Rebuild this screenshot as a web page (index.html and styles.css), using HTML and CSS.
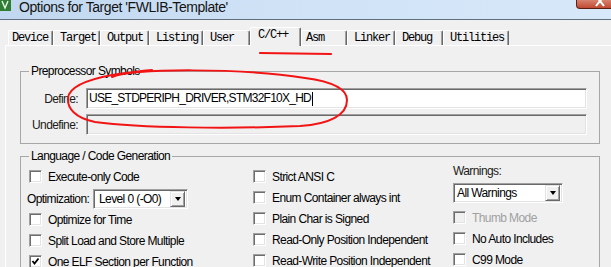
FILE: index.html
```html
<!DOCTYPE html>
<html lang="en">
<head>
    <meta charset="UTF-8">
    <meta name="viewport" content="width=device-width, initial-scale=1.0">
    <title>Options for Target 'FWLIB-Template'</title>
    <link rel="stylesheet" href="styles.css">
</head>
<body>
    <div class="titlebar">
        <svg class="app-icon" viewBox="0 0 11 11">
            <rect x="0" y="0" width="11" height="11" fill="#2e7d32"/>
            <path d="M2 1 L5 8 L8 1" fill="none" stroke="#e8f5e9" stroke-width="1.4"/>
        </svg>
        <span class="title">Options for Target 'FWLIB-Template'</span>
        <div class="close-btn">
            <svg viewBox="0 0 41 9" width="41" height="9">
                <path d="M20 -3 L28 7 M28 -3 L20 7" stroke="#fff" stroke-width="2"/>
            </svg>
        </div>
    </div>

    <div class="dialog">
        <div class="tabs">
            <div class="tab">Device</div>
            <div class="tab">Target</div>
            <div class="tab">Output</div>
            <div class="tab">Listing</div>
            <div class="tab">User</div>
            <div class="tab active">C/C++</div>
            <div class="tab">Asm</div>
            <div class="tab">Linker</div>
            <div class="tab">Debug</div>
            <div class="tab">Utilities</div>
        </div>

        <div class="pane">
            <fieldset class="group group-pre">
                <legend>Preprocessor Symbols</legend>
                <div class="field-row">
                    <span class="field-label">Define:</span>
                    <div class="textbox">USE_STDPERIPH_DRIVER,STM32F10X_HD<span class="caret"></span></div>
                </div>
                <div class="field-row">
                    <span class="field-label">Undefine:</span>
                    <div class="textbox disabled"></div>
                </div>
            </fieldset>

            <fieldset class="group group-lang">
                <legend>Language / Code Generation</legend>
                <div class="cols">
                    <div class="col col-left">
                        <div class="check"><span class="box"></span>Execute-only Code</div>
                        <div class="opt-row">
                            <span class="opt-label">Optimization:</span>
                            <div class="select select-opt">
                                <span>Level 0 (-O0)</span>
                                <span class="select-arrow"><i></i></span>
                            </div>
                        </div>
                        <div class="check"><span class="box"></span>Optimize for Time</div>
                        <div class="check"><span class="box"></span>Split Load and Store Multiple</div>
                        <div class="check">
                            <span class="box">
                                <svg viewBox="0 0 9 9" width="9" height="9"><path d="M1.5 4 L3.5 6.5 L7.5 1.5" fill="none" stroke="#000" stroke-width="1.8"/></svg>
                            </span>One ELF Section per Function
                        </div>
                    </div>

                    <div class="col col-mid">
                        <div class="check"><span class="box"></span>Strict ANSI C</div>
                        <div class="check"><span class="box"></span>Enum Container always int</div>
                        <div class="check"><span class="box"></span>Plain Char is Signed</div>
                        <div class="check"><span class="box"></span>Read-Only Position Independent</div>
                        <div class="check"><span class="box"></span>Read-Write Position Independent</div>
                    </div>

                    <div class="col col-right">
                        <div class="warn-label">Warnings:</div>
                        <div class="select select-warn">
                            <span>All Warnings</span>
                            <span class="select-arrow"><i></i></span>
                        </div>
                        <div class="check disabled"><span class="box"></span>Thumb Mode</div>
                        <div class="check"><span class="box"></span>No Auto Includes</div>
                        <div class="check"><span class="box"></span>C99 Mode</div>
                    </div>
                </div>
            </fieldset>
        </div>
    </div>

    <!-- red pen marks drawn over the screenshot -->
    <svg class="marks" viewBox="0 0 611 267" width="611" height="267">
        <path d="M260 53 L331 54" stroke="#f21414" stroke-width="2.2" fill="none" stroke-linecap="round"/>
        <path d="M112 77 C 135 68, 240 68, 305 78 C 335 82, 347 90, 347 100 C 347 115, 330 124, 300 126 C 230 129, 140 128, 95 122 C 75 118, 67 108, 68 98 C 69 88, 85 80, 112 75 C 125 73, 140 71, 152 70" stroke="#f21414" stroke-width="2" fill="none" stroke-linecap="round"/>
    </svg>
</body>
</html>
```

FILE: styles.css
```css
html, body {
    margin: 0;
}

body {
    width: 611px;
    height: 267px;
    overflow: hidden;
    position: relative;
    background: #f0f0f0;
    font-family: "Liberation Sans", Arial, sans-serif;
    font-size: 12px;
    letter-spacing: -0.6px;
    color: #000;
}

/* window caption */
.titlebar {
    height: 19px;
    border-bottom: 1px solid #5f6f80;
    background: linear-gradient(to right, #c0d7ef, #cfe2f6 45%, #d7e8f9);
    display: flex;
    align-items: flex-start;
    position: relative;
}

.app-icon {
    width: 11px;
    height: 11px;
    margin-right: 8px;
    flex: none;
}

.title {
    font-size: 14px;
    line-height: 14px;
    letter-spacing: -0.45px;
    color: #141414;
}

.close-btn {
    position: absolute;
    top: 0;
    right: -6px;
    width: 41px;
    height: 9px;
    box-sizing: border-box;
    border: 1px solid #5c1f14;
    border-top: none;
    border-radius: 0 0 0 4px;
    background: linear-gradient(#d7826e, #c14a32);
    overflow: hidden;
}

.close-btn svg {
    display: block;
    margin: -1px 0 0 -1px;
}

/* property sheet tabs */
.tabs {
    display: flex;
    align-items: flex-end;
    height: 18px;
    margin: 7px 0 0 8px;
    position: relative;
    z-index: 1;
    font-family: "Liberation Mono", "Courier New", monospace;
    font-size: 12px;
    letter-spacing: -1.2px;
}

.tab {
    box-sizing: border-box;
    height: 15px;
    padding-left: 6px;
    line-height: 14px;
    border: 1px solid;
    border-color: #fff #696969 transparent #fff;
    border-bottom: none;
    border-radius: 2px 2px 0 0;
    box-shadow: inset -1px 0 0 #a0a0a0;
    white-space: nowrap;
    overflow: hidden;
}

.tab:nth-child(1) { width: 45px; padding-left: 3px; }
.tab:nth-child(2) { width: 47px; }
.tab:nth-child(3) { width: 49px; }
.tab:nth-child(4) { width: 54px; }
.tab:nth-child(5) { width: 47px; }
.tab:nth-child(6) { width: 51px; }
.tab:nth-child(7) { width: 46px; padding-left: 4px; }
.tab:nth-child(8) { width: 48px; }
.tab:nth-child(9) { width: 48px; }
.tab:nth-child(10) { width: 66px; }

.tab.active {
    height: 19px;
    margin-bottom: -1px;
    background: #f0f0f0;
    padding-left: 7px;
}

.pane {
    margin-left: 5px;
    border-top: 1px solid #fff;
    border-left: 1px solid #fff;
    padding: 19px 11px 0 14px;
}

/* group boxes */
.group {
    margin: 0;
    padding: 10px 0 8px;
    border: 1px solid #a7a7a7;
    min-width: 0;
}

.group legend {
    padding: 0 2px;
    margin-left: 8px;
    line-height: 13px;
}

.group-lang {
    margin-top: 6px;
    padding: 0 0 40px;
}

.field-row {
    display: flex;
    align-items: center;
    height: 21px;
}

.field-row + .field-row {
    margin-top: 5px;
}

.field-label {
    width: 57px;
    margin-right: 8px;
    text-align: right;
    color: #1a1a1a;
}

.textbox,
.select {
    box-sizing: border-box;
    border: 1px solid;
    border-color: #a0a0a0 #fff #fff #a0a0a0;
    box-shadow: inset 1px 1px 0 #696969, inset -1px -1px 0 #e3e3e3;
    background: #fff;
}

.textbox {
    flex: 1;
    height: 21px;
    margin-right: 12px;
    padding: 0 0 0 2px;
    line-height: 19px;
    letter-spacing: -0.75px;
    display: flex;
    align-items: center;
}

.textbox.disabled {
    background: #f0f0f0;
}

.caret {
    display: inline-block;
    width: 1px;
    height: 14px;
    margin-left: 1px;
    background: #000;
}

/* language / code generation columns */
.cols {
    display: grid;
    grid-template-columns: 226px 200px 1fr;
    padding-left: 6px;
}

.col-left { padding-top: 3px; }
.col-mid { padding-top: 3px; }
.col-right { padding-top: 2px; }

.check {
    display: flex;
    align-items: center;
    height: 21px;
    white-space: nowrap;
}

.box {
    box-sizing: border-box;
    width: 13px;
    height: 13px;
    margin-right: 6px;
    flex: none;
    border: 1px solid;
    border-color: #a0a0a0 #fff #fff #a0a0a0;
    box-shadow: inset 1px 1px 0 #6d6d6d, inset -1px -1px 0 #e3e3e3;
    background: #fff;
    display: flex;
    align-items: center;
    justify-content: center;
}

.box svg {
    display: block;
}

.col-left .box {
    margin-left: 2px;
}

.check.disabled {
    color: #a0a0a0;
}

.check.disabled .box {
    background: #f0f0f0;
}

.opt-row {
    display: flex;
    align-items: center;
    height: 20px;
    margin-top: 2px;
}

.opt-label {
    width: 66px;
    flex: none;
}

.select {
    height: 20px;
    display: flex;
    align-items: center;
    padding: 0 2px 0 5px;
}

.select-opt { width: 95px; }
.select-warn { width: 110px; margin-top: 5px; padding-left: 3px; }

.select-arrow {
    box-sizing: border-box;
    margin-left: auto;
    width: 15px;
    height: 16px;
    border: 1px solid;
    border-color: #e3e3e3 #696969 #696969 #e3e3e3;
    box-shadow: inset 1px 1px 0 #fff, inset -1px -1px 0 #a0a0a0;
    background: #f0f0f0;
    display: flex;
    align-items: center;
    justify-content: center;
}

.select-arrow i {
    width: 0;
    height: 0;
    border-left: 3.5px solid transparent;
    border-right: 3.5px solid transparent;
    border-top: 4px solid #000;
}

.warn-label {
    line-height: 13px;
    color: #1a1a1a;
}

.col-right .select + .check {
    margin-top: 4px;
}

/* annotation layer */
.marks {
    position: absolute;
    top: 0;
    left: 0;
    pointer-events: none;
}
```
